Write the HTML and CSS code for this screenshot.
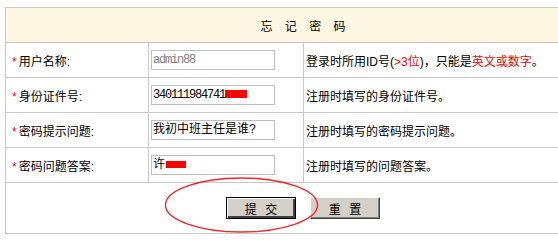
FILE: index.html
```html
<!DOCTYPE html>
<html lang="zh-CN">
<head>
  <meta charset="UTF-8">
  <link rel="stylesheet" href="styles.css">
  <title>忘记密码</title>
</head>
<body>
<div class="page">
<table class="form-table">
  <colgroup><col class="c1"><col class="c2"><col></colgroup>
  <tr><th colspan="3" class="title">忘 记 密 码</th></tr>
  <tr>
    <td class="label"><span class="req">*</span>用户名称:</td>
    <td><span class="field muted">admin88</span></td>
    <td class="hint">登录时所用ID号(<em>&gt;3位</em>)，只能是<em>英文或数字</em>。</td>
  </tr>
  <tr>
    <td class="label"><span class="req">*</span>身份证件号:</td>
    <td><span class="field">340111984741<i class="redact r1"></i></span></td>
    <td class="hint">注册时填写的身份证件号。</td>
  </tr>
  <tr>
    <td class="label"><span class="req">*</span>密码提示问题:</td>
    <td><span class="field cjk">我初中班主任是谁?</span></td>
    <td class="hint">注册时填写的密码提示问题。</td>
  </tr>
  <tr>
    <td class="label"><span class="req">*</span>密码问题答案:</td>
    <td><span class="field cjk">许<i class="redact r2"></i></span></td>
    <td class="hint">注册时填写的问题答案。</td>
  </tr>
  <tr>
    <td colspan="3" class="actions">
      <button class="btn btn-default">提 交</button><button class="btn">重 置</button>
    </td>
  </tr>
</table>
<svg class="mark" width="157" height="58" viewBox="0 0 157 58">
  <ellipse cx="78.5" cy="29" rx="76" ry="27" fill="none" stroke="#f0262a" stroke-width="1.4"/>
</svg>
</div>
</body>
</html>
```
FILE: styles.css
```css
html, body {
  margin: 0;
  background: #fff;
  overflow: hidden;
}
.page {
  position: relative;
  padding: 7px 0 0 5px;
  font: 12px "Liberation Sans", "Noto Sans CJK SC", sans-serif;
  color: #000;
}
.form-table {
  border-collapse: collapse;
  table-layout: fixed;
  width: 596px;
}
.c1 { width: 143px; }
.c2 { width: 155px; }
.form-table td,
.form-table th {
  border: 1px solid #c8c8c8;
  padding: 0 2px;
  height: 34px;
  text-align: left;
}
.form-table th.title {
  background: #fdf7e3;
  font-weight: normal;
  text-align: center;
  word-spacing: 9px;
}
.label {
  padding-left: 6px !important;
}
.req {
  color: #f00;
  margin-right: 2px;
}
.field {
  display: block;
  box-sizing: border-box;
  width: 124px;
  height: 20px;
  line-height: 18px;
  border: 1px solid #c0c0c0;
  padding-left: 1px;
  font-family: "Liberation Mono", "Noto Sans CJK SC", monospace;
  letter-spacing: -1.2px;
  white-space: nowrap;
  overflow: hidden;
}
.field.cjk {
  letter-spacing: 0;
}
.muted {
  color: #808080;
}
.redact {
  display: inline-block;
  background: #f00;
}
.r1 { width: 22px; height: 8px; }
.r2 { width: 20px; height: 7px; margin-left: 1px; }
.hint em {
  font-style: normal;
  color: #f00;
}
.form-table td.actions {
  height: 50px;
  text-align: center;
}
.btn {
  width: 70px;
  height: 22px;
  margin: 0 7px;
  padding: 0;
  background: #d4d0c8;
  border: 1px solid;
  border-color: #fff #404040 #404040 #fff;
  box-shadow: inset -1px -1px #808080;
  font: inherit;
  color: #000;
  word-spacing: 5px;
}
.btn-default {
  border-color: #000;
  box-shadow: inset 1px 1px #fff, inset -2px -2px #404040;
}
.mark {
  position: absolute;
  left: 163px;
  top: 176px;
}
```
